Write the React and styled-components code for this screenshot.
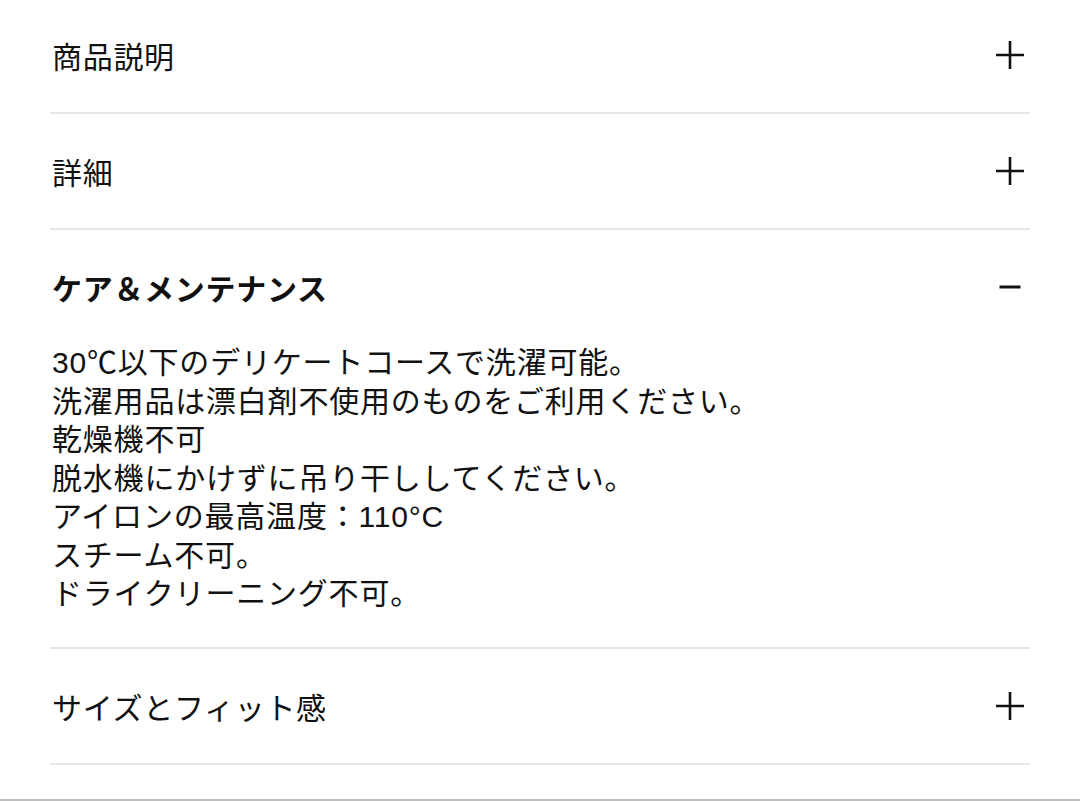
import React, { useState } from "react";
import styled, { createGlobalStyle } from "styled-components";

const GlobalStyle = createGlobalStyle`
  html, body {
    margin: 0;
    padding: 0;
    background: #ffffff;
  }
  body {
    font-family: "Liberation Sans", "Noto Sans CJK JP", sans-serif;
    color: #111111;
  }
`;

const sections = [
  { id: "desc", title: "商品説明", body: [] },
  { id: "detail", title: "詳細", body: [] },
  {
    id: "care",
    title: "ケア＆メンテナンス",
    body: [
      "30℃以下のデリケートコースで洗濯可能。",
      "洗濯用品は漂白剤不使用のものをご利用ください。",
      "乾燥機不可",
      "脱水機にかけずに吊り干ししてください。",
      "アイロンの最高温度：110°C",
      "スチーム不可。",
      "ドライクリーニング不可。",
    ],
  },
  { id: "size", title: "サイズとフィット感", body: [] },
];

const PlusIcon = () => (
  <svg width="28" height="28" viewBox="0 0 28 28">
    <path d="M14 0V28M0 14H28" stroke="#111" strokeWidth="2.6" fill="none" />
  </svg>
);

const MinusIcon = () => (
  <svg width="22" height="28" viewBox="0 0 22 28">
    <path d="M0.5 14H21.5" stroke="#111" strokeWidth="3" fill="none" />
  </svg>
);

const App = () => {
  const [open, setOpen] = useState("care");

  return (
    <>
      <GlobalStyle />
      <Page>
        <List>
          {sections.map((s) => {
            const isOpen = open === s.id;
            return (
              <Item key={s.id}>
                <Header onClick={() => setOpen(isOpen ? null : s.id)}>
                  <Title $bold={isOpen}>{s.title}</Title>
                  <IconBox>{isOpen ? <MinusIcon /> : <PlusIcon />}</IconBox>
                </Header>
                {isOpen && (
                  <Body>
                    {s.body.map((line, i) => (
                      <Line key={i}>{line}</Line>
                    ))}
                  </Body>
                )}
              </Item>
            );
          })}
        </List>
        <BottomEdge />
      </Page>
    </>
  );
};

export default App;

const Page = styled.div`
  width: 1080px;
  height: 801px;
  overflow: hidden;
  display: flex;
  flex-direction: column;
`;

const List = styled.div`
  margin: -2px 50px 0 50px;
  display: flex;
  flex-direction: column;
`;

const Item = styled.div`
  border-bottom: 2px solid #e6e6e6;
`;

const Header = styled.div`
  height: 114px;
  display: flex;
  align-items: center;
  justify-content: space-between;
  cursor: pointer;
`;

const Title = styled.span`
  font-size: 30px;
  font-weight: ${(p) => (p.$bold ? 700 : 400)};
  padding-left: 2px;
  letter-spacing: 0.7px;
`;

const IconBox = styled.div`
  width: 40px;
  display: flex;
  justify-content: center;
  align-items: center;
`;

const Body = styled.div`
  padding: 0 0 33px 2px;
  display: flex;
  flex-direction: column;
`;

const Line = styled.p`
  margin: 0;
  font-size: 30px;
  line-height: 38.5px;
  letter-spacing: 0.8px;
`;

const BottomEdge = styled.div`
  margin-top: auto;
  height: 2px;
  background: #bdbdbd;
`;
